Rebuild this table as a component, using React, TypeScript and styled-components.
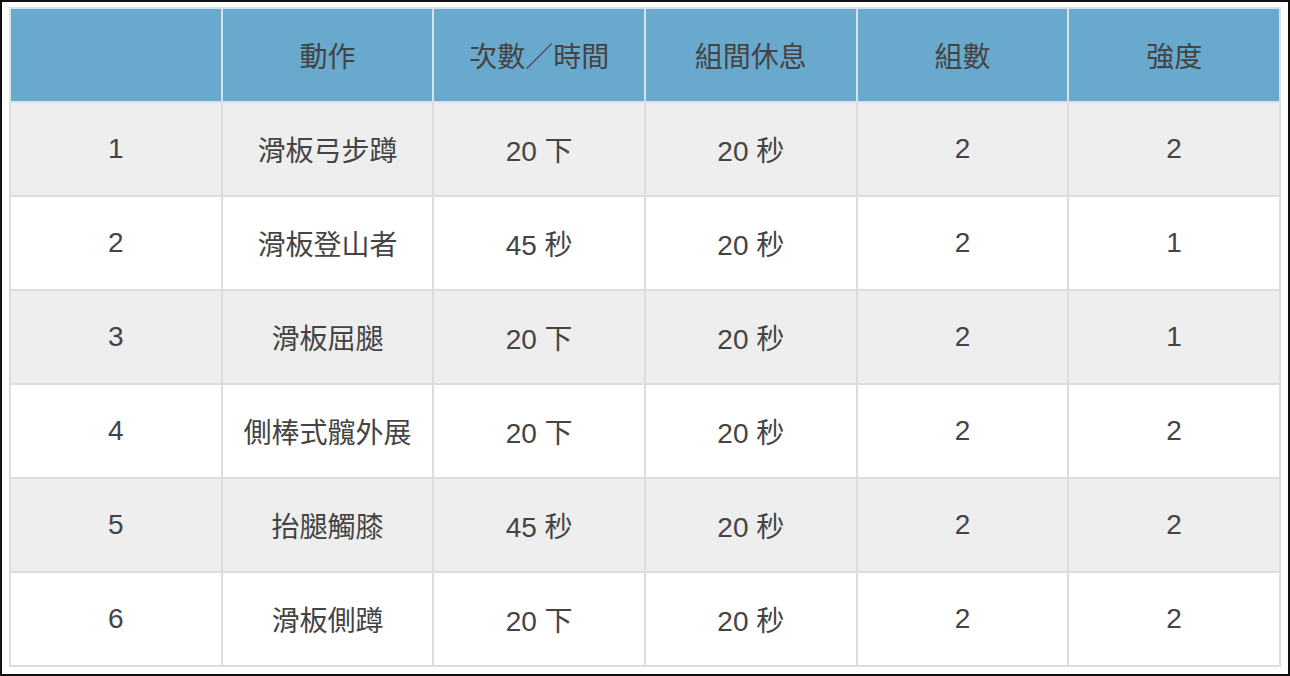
import { FC } from 'react';
import styled, { createGlobalStyle } from 'styled-components';

const GlobalStyle = createGlobalStyle`
  html, body {
    margin: 0;
    padding: 0;
    background: #fff;
  }
`;

interface Row {
  no: number;
  move: string;
  reps: string;
  rest: string;
  sets: number;
  level: number;
}

const rows: Row[] = [
  { no: 1, move: '滑板弓步蹲', reps: '20 下', rest: '20 秒', sets: 2, level: 2 },
  { no: 2, move: '滑板登山者', reps: '45 秒', rest: '20 秒', sets: 2, level: 1 },
  { no: 3, move: '滑板屈腿', reps: '20 下', rest: '20 秒', sets: 2, level: 1 },
  { no: 4, move: '側棒式髖外展', reps: '20 下', rest: '20 秒', sets: 2, level: 2 },
  { no: 5, move: '抬腿觸膝', reps: '45 秒', rest: '20 秒', sets: 2, level: 2 },
  { no: 6, move: '滑板側蹲', reps: '20 下', rest: '20 秒', sets: 2, level: 2 },
];

const headers = ['', '動作', '次數／時間', '組間休息', '組數', '強度'];

const Frame = styled.div`
  box-sizing: border-box;
  width: 1290px;
  height: 676px;
  border: 2px solid #111;
  padding: 5px 8px 0 7px;
  background: #fff;
`;

const Table = styled.table`
  width: 1272px;
  border-collapse: collapse;
  table-layout: fixed;
  font-family: 'Liberation Sans', 'Noto Sans CJK TC', sans-serif;
  font-size: 28px;
  color: #444;
`;

const HeadCell = styled.th`
  height: 92px;
  padding: 0;
  background: #69a9cd;
  border: 2px solid #d6e3eb;
  font-weight: normal;
  text-align: center;
  vertical-align: middle;
`;

const BodyRow = styled.tr<{ $shaded: boolean }>`
  background: ${(p) => (p.$shaded ? '#eeeeee' : '#ffffff')};
`;

const Cell = styled.td`
  height: 92px;
  padding: 0;
  border: 2px solid #dddddd;
  text-align: center;
  vertical-align: middle;
`;

const App: FC = () => (
  <>
    <GlobalStyle />
    <Frame>
      <Table>
        <thead>
          <tr>
            {headers.map((h, i) => (
              <HeadCell key={i}>{h}</HeadCell>
            ))}
          </tr>
        </thead>
        <tbody>
          {rows.map((r, i) => (
            <BodyRow key={r.no} $shaded={i % 2 === 0}>
              <Cell>{r.no}</Cell>
              <Cell>{r.move}</Cell>
              <Cell>{r.reps}</Cell>
              <Cell>{r.rest}</Cell>
              <Cell>{r.sets}</Cell>
              <Cell>{r.level}</Cell>
            </BodyRow>
          ))}
        </tbody>
      </Table>
    </Frame>
  </>
);

export default App;
